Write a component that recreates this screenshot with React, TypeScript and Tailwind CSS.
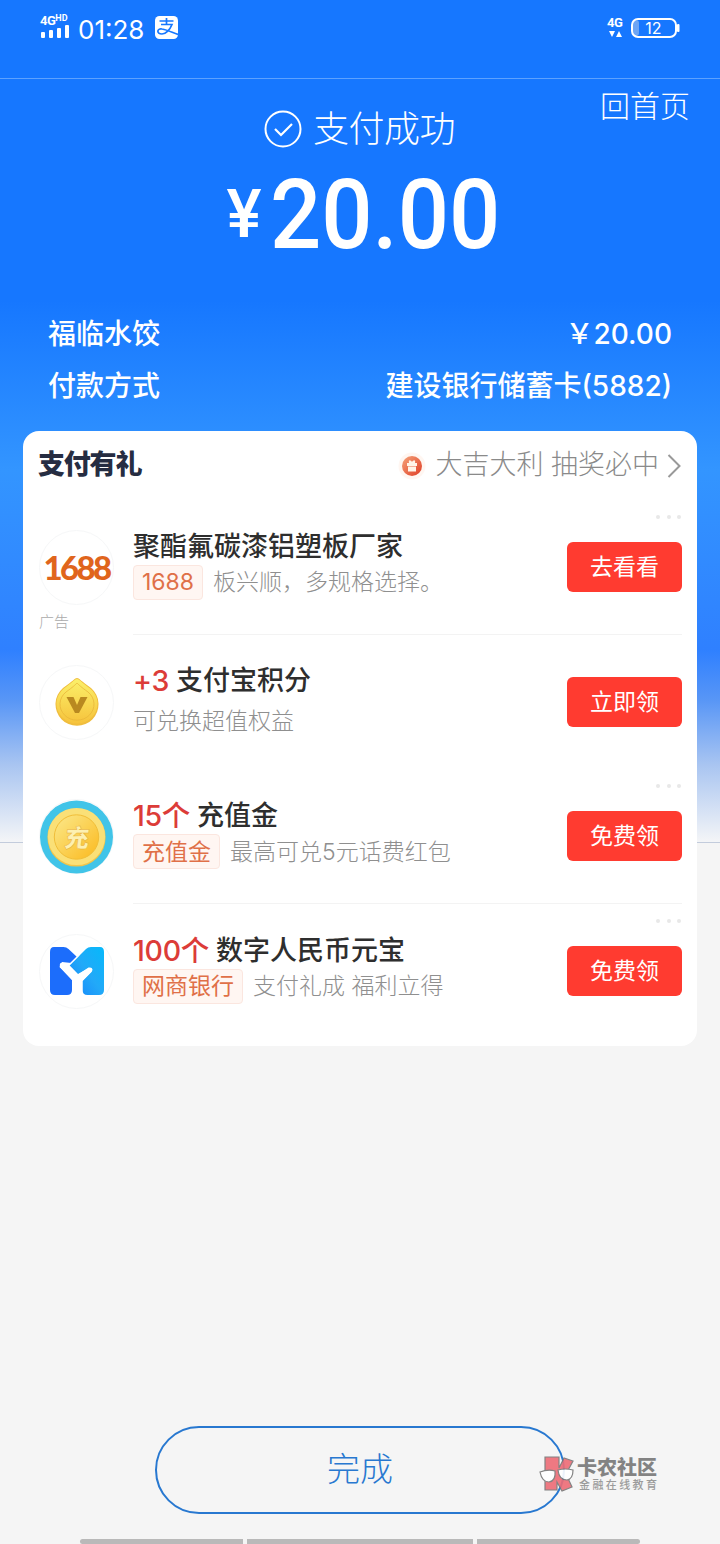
import type { ReactNode } from 'react'
import clsx from 'clsx'

type Reward = {
  id: string
  icon: ReactNode
  count?: string
  title: string
  tag?: string
  desc: string
  action: string
  ad?: boolean
  more?: boolean
  divider?: boolean
}

function Logo1688() {
  return (
    <span className="font-[Lato] text-[33px] font-black tracking-[-2.6px] text-[#e0651c]">1688</span>
  )
}

function PointsIcon() {
  return (
    <svg width="46" height="50" viewBox="0 0 46 50">
      <defs>
        <linearGradient id="points" x1="0" y1="0" x2="0" y2="1">
          <stop offset="0" stopColor="#fbf06a" />
          <stop offset="1" stopColor="#f6c33c" />
        </linearGradient>
      </defs>
      <path d="M23 1c2 0 4 3 14 10a21.500 21.500 0 1 1-28 0C19 4 21 1 23 1Z" fill="#f0bd3d" />
      <path d="M23 2c2 0 4 3 13 9.500a20.500 19.800 0 1 1-26 0C19 5 21 2 23 2Z" fill="url(#points)" />
      <path d="M23 6c2 2 4 4 11 9a17 16 0 1 1-22 0C19 10 21 8 23 6Z" fill="none" stroke="#e9b63a" strokeWidth="0.800" />
      <path d="M12.500 20h7l3.500 8 3.500-8h7L25 36h-4Z" fill="#b98920" />
    </svg>
  )
}

function RechargeIcon() {
  return (
    <svg width="74" height="74" viewBox="0 0 74 74">
      <defs>
        <linearGradient id="coin" x1="0" y1="0" x2="1" y2="1">
          <stop offset="0" stopColor="#fbe98c" />
          <stop offset="1" stopColor="#fbb91d" />
        </linearGradient>
      </defs>
      <circle cx="37" cy="37" r="37" fill="#41c4e8" />
      <circle cx="37" cy="37.500" r="29.500" fill="#f3c548" />
      <circle cx="37" cy="36.500" r="29" fill="#fae077" />
      <circle cx="37" cy="37" r="22.500" fill="url(#coin)" stroke="#f0bd38" strokeWidth="1" />
      <text
        x="38"
        y="47"
        textAnchor="middle"
        transform="skewX(-8) translate(5 0)"
        className="fill-[#fdf0b0] font-['Noto_Sans_CJK_SC',sans-serif] text-[25px] font-black"
        stroke="#e5ad35"
        strokeWidth="0.500"
      >
        充
      </text>
    </svg>
  )
}

function MyBankIcon() {
  return (
    <svg width="54" height="48" viewBox="0 0 54 48">
      <defs>
        <linearGradient id="bank" x1="0" y1="1" x2="1" y2="0">
          <stop offset="0" stopColor="#1683fb" />
          <stop offset="0.500" stopColor="#22a9f8" />
          <stop offset="1" stopColor="#06b9fb" />
        </linearGradient>
      </defs>
      <path d="M4 0h9.500q3 0 5 2L27 10 21.500 16 12 15 9.500 20 22 33v10q0 5-5 5H5q-5 0-5-5V5q0-5 4-5Z" fill="#1c6dfb" />
      <path d="M50 0h-9q-3 0-5 2L19.500 18.500 28 27l11-6q5 0 2.500 4L32.500 34v9q0 5 5 5H49q5 0 5-5V5q0-5-4-5Z" fill="url(#bank)" />
      <path d="M19.500 18.500 28 27.500 38.500 20.500q5-.500 3.500 3.500L32.500 34v14H22V33L10 20q-1-5 3-4Z" fill="#fff" />
      <path d="M18 19 29 8" stroke="#fff" strokeWidth="1.200" />
    </svg>
  )
}

const REWARDS: Reward[] = [
  {
    id: 'ad',
    icon: <Logo1688 />,
    title: '聚酯氟碳漆铝塑板厂家',
    tag: '1688',
    desc: '板兴顺，多规格选择。',
    action: '去看看',
    ad: true,
    more: true,
    divider: true,
  },
  {
    id: 'points',
    icon: <PointsIcon />,
    count: '+3',
    title: '支付宝积分',
    desc: '可兑换超值权益',
    action: '立即领',
  },
  {
    id: 'recharge',
    icon: <RechargeIcon />,
    count: '15个',
    title: '充值金',
    tag: '充值金',
    desc: '最高可兑5元话费红包',
    action: '免费领',
    more: true,
    divider: true,
  },
  {
    id: 'bank',
    icon: <MyBankIcon />,
    count: '100个',
    title: '数字人民币元宝',
    tag: '网商银行',
    desc: '支付礼成 福利立得',
    action: '免费领',
    more: true,
  },
]

function StatusBar() {
  return (
    <div className="flex h-[79px] items-start justify-between border-b border-[#5da2ff] pr-10 pl-10">
      <div className="flex pt-[14px]">
        <div className="w-[30px]">
          <div className="flex h-[12px] items-start font-[Roboto] leading-none font-bold">
            <span className="text-[13px] leading-[13px] tracking-[-0.5px]">4G</span>
            <span className="text-[9px] leading-[9px]">HD</span>
          </div>
          <svg className="mt-[-2px]" width="30" height="14" viewBox="0 0 30 14" fill="currentColor">
            <rect x="1" y="8" width="4" height="6" rx="1" />
            <rect x="9" y="6" width="4" height="8" rx="1" />
            <rect x="17" y="4" width="4" height="10" rx="1" />
            <rect x="25" y="1" width="4" height="13" rx="1" />
          </svg>
        </div>
        <span className="ml-[8px] w-[77px] font-[Inter] text-[26px] leading-[31px] whitespace-nowrap">01:28</span>
        <svg className="mt-[2px]" width="23" height="23" viewBox="0 0 23 23">
          <rect width="23" height="23" rx="4.500" fill="#fff" />
          <path
            d="M11.500 2v6M4.500 5h14M6 8.500h11c-2 5-6 9.500-10 9.500-6 0-5-6 0-5 6 1 11 4 16 5.500"
            fill="none"
            stroke="#1677ff"
            strokeWidth="1.700"
          />
        </svg>
      </div>
      <div className="flex pt-[16px]">
        <div className="w-[24px]">
          <span className="block font-[Roboto] text-[13px] leading-[14px] font-bold tracking-[-0.5px]">4G</span>
          <svg className="ml-[2px]" width="13" height="7" viewBox="0 0 13 7" fill="currentColor">
            <path d="M0 1h6L3 7ZM7 7h6L10 1Z" />
          </svg>
        </div>
        <svg width="49" height="23" viewBox="0 0 49 23">
          <rect x="2" y="4" width="6" height="16" rx="3" fill="#6da5f5" />
          <rect x="1" y="3" width="44" height="18" rx="6" fill="none" stroke="#fff" strokeWidth="2" />
          <rect x="46" y="8" width="2.500" height="8" rx="1" fill="#fff" />
          <text x="22.500" y="18" textAnchor="middle" className="fill-white font-[Inter] text-[16px]">12</text>
        </svg>
      </div>
    </div>
  )
}

function MoreDots() {
  return (
    <div className="absolute top-[15px] right-[16px] flex gap-[6.5px]">
      {[0, 1, 2].map(i => (
        <span key={i} className="size-[4px] rounded-full bg-[#e8e8e8]" />
      ))}
    </div>
  )
}

function RewardRow({ reward }: { reward: Reward }) {
  return (
    <div className="relative flex h-[134.67px] pr-[15px] pl-4">
      {reward.more && <MoreDots />}
      <div className="w-[94px] pt-[30px]">
        <div className="flex size-[75px] items-center justify-center rounded-full border border-[#f6f7f8]">
          {reward.icon}
        </div>
        {reward.ad && <span className="mt-[7px] block text-[15px] leading-5 font-light text-[#aaa]">广告</span>}
      </div>
      <div className={clsx('flex flex-1 border-b', reward.divider ? 'border-[#f3f3f3]' : 'border-transparent')}>
        <div className="flex-1 pt-[29px]">
          <div className="flex h-9 items-center text-[27px] font-medium whitespace-nowrap text-[#2e2e2e]">
            {reward.count && (
              <span className="mr-[7px] text-[28.5px] tracking-[-0.3px] text-[#dc3c38]">{reward.count}</span>
            )}
            <span>{reward.title}</span>
          </div>
          <div className={clsx('flex h-[35px] items-center text-[23px] font-light whitespace-nowrap', !reward.tag && 'mt-[4px]')}>
            {reward.tag && (
              <span className="mr-[10px] flex h-[35px] items-center rounded-[4px] border border-[#fbe6df] bg-[#fff6f2] px-[8px] font-normal text-[#e07048]">
                {reward.tag}
              </span>
            )}
            <span className="text-[#8f8f8f]">{reward.desc}</span>
          </div>
        </div>
        <button className="mt-[42px] h-[50px] w-[115px] rounded-[6px] bg-[#ff3b30] text-[23px] leading-[50px] text-white">
          {reward.action}
        </button>
      </div>
    </div>
  )
}

function GiftBadge() {
  return (
    <svg width="30" height="30" viewBox="0 0 30 30">
      <defs>
        <linearGradient id="gift" x1="0" y1="0" x2="1" y2="1">
          <stop offset="0" stopColor="#f5a47a" />
          <stop offset="1" stopColor="#df3b24" />
        </linearGradient>
      </defs>
      <circle cx="15" cy="15" r="13.500" fill="#fff6f1" />
      <circle cx="15" cy="15" r="10" fill="url(#gift)" />
      <path d="M10 12h10v3H10ZM11 15.500h8v5h-8ZM12 12c-1-4 2-3 3-1 1-2 4-3 3 1Z" fill="#fff4e8" />
    </svg>
  )
}

function Watermark() {
  return (
    <div className="absolute top-[1452px] left-[539px] flex opacity-90">
      <svg width="37" height="42" viewBox="0 0 37 42" stroke="#777" strokeWidth="1.200">
        <path d="M6 5h14v11l5-10 9 3-7 13 6 13-10 4-5-9v8H6Z" fill="#ee6c76" />
        <path d="M1 20q8-3 15-1 1 10-6 11-7 0-9-10ZM19 18q7-2 15 0 0 9-6 10-8 0-9-10Z" fill="#fff" />
      </svg>
      <div className="ml-[1px] whitespace-nowrap text-[#777]">
        <div className="mt-[5px] text-[20px] leading-[22px] font-black">卡农社区</div>
        <div className="ml-[2px] text-[11px] leading-[12px] font-medium tracking-[2.4px] text-[#929292]">金融在线教育</div>
      </div>
    </div>
  )
}

export default function App() {
  return (
    <div className="relative flex h-[1544px] w-[720px] flex-col overflow-hidden bg-[#f5f5f5] font-[Inter,'Noto_Sans_CJK_SC',sans-serif]">
      <div className="h-[843px] shrink-0 border-b border-[#c3ccdc] bg-[linear-gradient(180deg,#1677ff_0px,#1677ff_300px,#3395ff_470px,#2f80ff_650px,#5896f6_700px,#a9c5f1_765px,#f4f5f7_842px)] text-white">
        <StatusBar />

        {/* Payment result */}
        <div className="relative h-[229px]">
          <button className="absolute top-[7px] right-[30px] text-[30px] leading-10 font-light">回首页</button>
          <div className="flex items-center pt-[25px] pl-[264px]">
            <svg width="38" height="38" viewBox="0 0 38 38" fill="none" stroke="currentColor">
              <circle cx="19" cy="19" r="17.500" strokeWidth="2" />
              <path d="m11 19 6 6L28 14" strokeWidth="2.200" />
            </svg>
            <h1 className="ml-[11px] text-[36px] leading-[50px] font-light tracking-[-0.5px]">支付成功</h1>
          </div>
          <div className="flex h-[90px] items-start pl-[218px] whitespace-nowrap">
            <span className="mt-[26px] flex w-[52px] justify-center font-[Roboto] text-[66px] leading-[70px] font-medium">¥</span>
            <span className="mt-[13px] origin-left scale-x-[0.94] font-[Roboto] text-[96px] leading-[96px] font-medium">20.00</span>
          </div>
        </div>

        {/* Order details */}
        <dl className="pr-[48px] pl-[48px] text-[28px] leading-[52px] font-medium">
          <div className="flex justify-between">
            <dt>福临水饺</dt>
            <dd>￥20.00</dd>
          </div>
          <div className="flex justify-between">
            <dt>付款方式</dt>
            <dd>建设银行储蓄卡(5882)</dd>
          </div>
        </dl>
      </div>

      {/* Rewards card */}
      <section className="z-10 mx-[23px] mt-[-412px] h-[615px] shrink-0 rounded-[16px] bg-white">
        <header className="flex h-[69px] items-center justify-between pr-[15px] pl-[15px]">
          <h2 className="text-[27px] font-black tracking-[-1.2px] text-[#262d42]">支付有礼</h2>
          <div className="flex items-center text-[27px] font-light text-[#8a8a8a]">
            <GiftBadge />
            <span className="ml-[8px]">大吉大利 抽奖必中</span>
            <svg className="ml-[8px]" width="15" height="26" viewBox="0 0 15 26" fill="none" stroke="#999" strokeWidth="2">
              <path d="m1.500 2 11 11-11 11" />
            </svg>
          </div>
        </header>
        {REWARDS.map(r => (
          <RewardRow key={r.id} reward={r} />
        ))}
      </section>

      <button className="mx-auto mt-[380px] h-[88px] w-[410px] shrink-0 rounded-full border-2 border-[#2878d0] text-[33px] font-light text-[#2878d0]">
        完成
      </button>

      {/* System navigation hints */}
      <div className="mx-[80px] mt-[25px] flex h-[5px] shrink-0 gap-[4px]">
        <span className="w-[163px] rounded-l-full bg-[#b9b9b9]" />
        <span className="w-[226px] bg-[#b9b9b9]" />
        <span className="flex-1 rounded-r-full bg-[#b9b9b9]" />
      </div>

      <Watermark />
    </div>
  )
}
